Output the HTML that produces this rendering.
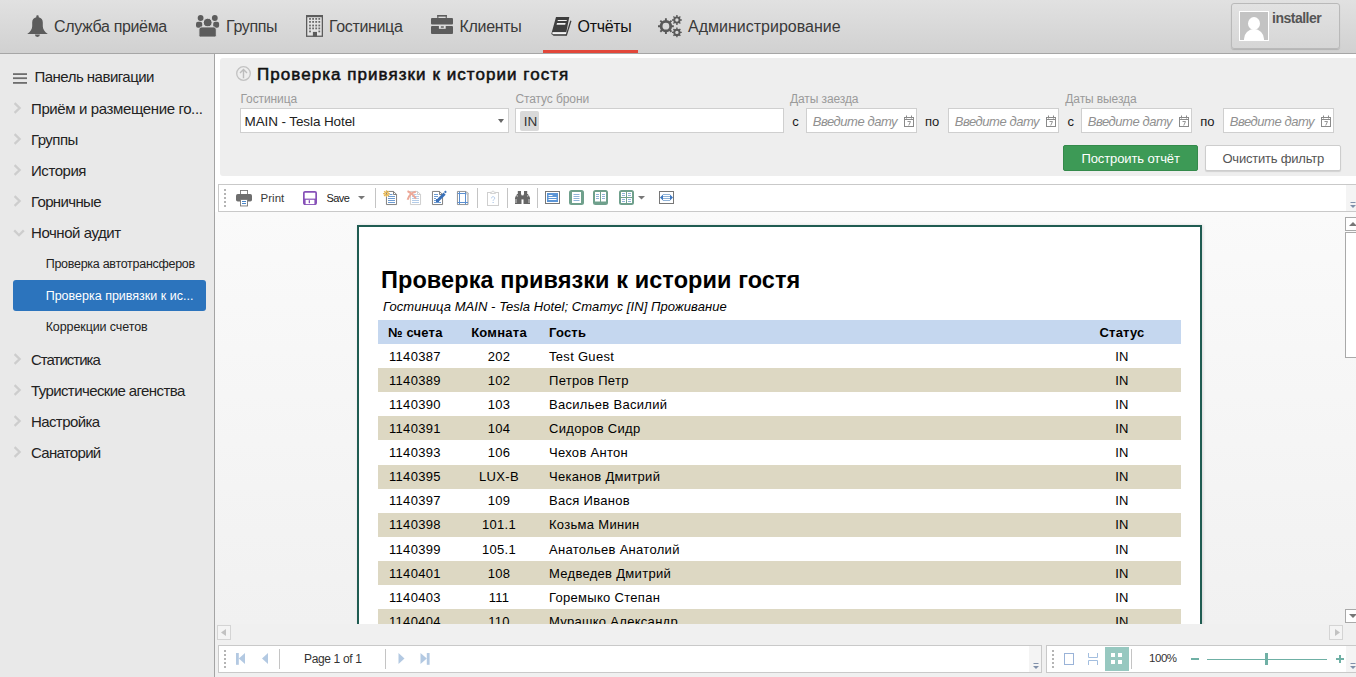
<!DOCTYPE html>
<html><head><meta charset="utf-8">
<style>
*{margin:0;padding:0;box-sizing:border-box}
html,body{width:1356px;height:677px;overflow:hidden;background:#fff;font-family:"Liberation Sans",sans-serif;color:#333}
.a{position:absolute}
.t{position:absolute;white-space:nowrap;line-height:1}
svg{position:absolute;overflow:visible}
#hdr{left:0;top:0;width:1356px;height:54px;background:linear-gradient(#e1e1e1,#d1d1d1);border-bottom:1px solid #a6a6a6}
.tab{font-size:16px;letter-spacing:-0.35px;color:#3a3a3a;top:18.5px}
#side{left:0;top:54px;width:215px;height:623px;background:#e9e9e9;border-right:1px solid #a4a4a4}
.mi{font-size:15px;letter-spacing:-0.45px;color:#222;left:31px}
.si{font-size:12.5px;letter-spacing:-0.1px;color:#222;left:45.7px}
.chev{left:13px;width:8px;height:12px}
#panel{left:220px;top:58px;width:1136px;height:118px;background:#eeeeee;border-radius:3px 0 0 3px}
.lbl{font-size:12px;color:#9a9a9a;top:92.5px;letter-spacing:-0.1px}
.inp{top:108px;height:25px;background:#fff;border:1px solid #cfcfcf}
.ph{font-size:13px;font-style:italic;color:#909090;letter-spacing:-0.45px;top:114.5px}
.po{font-size:13px;color:#1a1a1a;top:115.1px}
</style></head><body>

<!-- HEADER -->
<div id="hdr" class="a"></div>
<!-- bell -->
<svg style="left:27px;top:14.7px" width="21" height="23" viewBox="0 0 21 23"><path d="M10.4 0.3c-.7 0-1.1.5-1.1 1.1v.9C6.6 2.8 5.2 4.7 5.2 7.6v3.6C5.2 14 3.6 16.6 0.2 18.9h20.6C17.4 16.6 15.8 14 15.8 11.2V7.6c0-2.9-1.4-4.8-4.1-5.3v-.9c0-.6-.4-1.1-1.1-1.1z" fill="#5c5c5c"/><path d="M7.9 19.6a2.5 2.4 0 0 0 5 0z" fill="#5c5c5c"/></svg>
<div class="t tab" style="left:54px">Служба приёма</div>
<!-- groups -->
<svg style="left:192px;top:10px" width="34" height="30" viewBox="0 0 34 30"><circle cx="8.6" cy="8" r="2.9" fill="#5c5c5c"/><circle cx="22.8" cy="8" r="2.9" fill="#5c5c5c"/><rect x="4" y="11.7" width="6.2" height="6" rx="2" fill="#5c5c5c"/><rect x="21.2" y="11.7" width="5.9" height="6" rx="2" fill="#5c5c5c"/><circle cx="15.7" cy="12.6" r="4.4" fill="#5c5c5c" stroke="#dcdcdc" stroke-width="1"/><path d="M9.8 16.9h11.6c1.6 0 2.9 1.3 2.9 2.9v6c0 .9-.7 1.3-1.4 1.3H8.3c-.8 0-1.4-.5-1.4-1.3v-6c0-1.6 1.3-2.9 2.9-2.9z" fill="#5c5c5c" stroke="#dadada" stroke-width="1"/></svg>
<div class="t tab" style="left:226px">Группы</div>
<!-- building -->
<svg style="left:306px;top:15px" width="17" height="22" viewBox="0 0 17 22"><rect x="0.65" y="0.75" width="15.7" height="20.5" fill="#e4e4e4" stroke="#5c5c5c" stroke-width="1.3"/><rect x="0" y="0" width="17" height="2.2" fill="#5c5c5c"/><g fill="#6a6a6a"><rect x="3.1" y="3.0" width="1.8" height="1.8"/><rect x="6.2" y="3.0" width="1.8" height="1.8"/><rect x="9.3" y="3.0" width="1.8" height="1.8"/><rect x="12.4" y="3.0" width="1.8" height="1.8"/><rect x="3.1" y="6.0" width="1.8" height="1.8"/><rect x="6.2" y="6.0" width="1.8" height="1.8"/><rect x="9.3" y="6.0" width="1.8" height="1.8"/><rect x="12.4" y="6.0" width="1.8" height="1.8"/><rect x="3.1" y="9.6" width="1.8" height="1.8"/><rect x="6.2" y="9.6" width="1.8" height="1.8"/><rect x="9.3" y="9.6" width="1.8" height="1.8"/><rect x="12.4" y="9.6" width="1.8" height="1.8"/><rect x="3.1" y="12.5" width="1.8" height="1.8"/><rect x="6.2" y="12.5" width="1.8" height="1.8"/><rect x="9.3" y="12.5" width="1.8" height="1.8"/><rect x="12.4" y="12.5" width="1.8" height="1.8"/><rect x="3.1" y="15.6" width="1.8" height="1.7"/><rect x="12.4" y="15.6" width="1.8" height="1.7"/></g><rect x="6.9" y="16.9" width="4.1" height="4.6" fill="#5c5c5c"/></svg>
<div class="t tab" style="left:329px">Гостиница</div>
<!-- briefcase -->
<svg style="left:431px;top:15px" width="22" height="19" viewBox="0 0 22 19"><rect x="6.3" y="0" width="9.5" height="1.6" fill="#5c5c5c"/><rect x="6.3" y="0" width="1.1" height="3.2" fill="#5c5c5c"/><rect x="14.7" y="0" width="1.1" height="3.2" fill="#5c5c5c"/><rect x="0" y="3" width="22" height="6.6" rx="1" fill="#5c5c5c"/><rect x="0" y="11" width="22" height="8" rx="1" fill="#5c5c5c"/><rect x="7.9" y="10.6" width="6.8" height="3.2" fill="#e2e2e2"/><rect x="9.8" y="11.3" width="3" height="1.4" fill="#5c5c5c"/></svg>
<div class="t tab" style="left:459.6px">Клиенты</div>
<!-- book -->
<svg style="left:546px;top:10px" width="32" height="30" viewBox="0 0 32 30"><path d="M10 6.9H23.3L20.3 22.2V25.7H7.6L5.3 24.1z" fill="#3d3d3d"/><path d="M6.4 22.1H20.4V24.2H6.4z" fill="#f4f4f4"/><path d="M24.9 10.8L20.2 25.6" stroke="#3d3d3d" stroke-width="1.3"/><path d="M11.9 9.9H20.9L20.6 11.1H11.6z" fill="#f0f0f0"/><path d="M11 13.1H19.6L19.2 14.8H10.6z" fill="#f0f0f0"/></svg>
<div class="t tab" style="left:577.6px;color:#111">Отчёты</div>
<div class="a" style="left:543px;top:50px;width:95px;height:3px;background:#e2473a"></div>
<!-- gears -->
<svg style="left:653px;top:10px" width="34" height="30" viewBox="0 0 34 30"><circle cx="12.9" cy="16.2" r="4.8" fill="none" stroke="#595959" stroke-width="2.8"/><path d="M18.40 16.20L20.80 16.20M16.79 20.09L18.49 21.79M12.90 21.70L12.90 24.10M9.01 20.09L7.31 21.79M7.40 16.20L5.00 16.20M9.01 12.31L7.31 10.61M12.90 10.70L12.90 8.30M16.79 12.31L18.49 10.61" stroke="#595959" stroke-width="1.9"/><circle cx="23.9" cy="10" r="2.65" fill="none" stroke="#595959" stroke-width="1.9"/><path d="M26.90 10.00L28.80 10.00M26.02 12.12L27.36 13.46M23.90 13.00L23.90 14.90M21.78 12.12L20.44 13.46M20.90 10.00L19.00 10.00M21.78 7.88L20.44 6.54M23.90 7.00L23.90 5.10M26.02 7.88L27.36 6.54" stroke="#595959" stroke-width="1.4"/><circle cx="23.9" cy="22.4" r="2.65" fill="none" stroke="#595959" stroke-width="1.9"/><path d="M26.90 22.40L28.80 22.40M26.02 24.52L27.36 25.86M23.90 25.40L23.90 27.30M21.78 24.52L20.44 25.86M20.90 22.40L19.00 22.40M21.78 20.28L20.44 18.94M23.90 19.40L23.90 17.50M26.02 20.28L27.36 18.94" stroke="#595959" stroke-width="1.4"/></svg>
<div class="t tab" style="left:688px;letter-spacing:0">Администрирование</div>
<!-- user -->
<div class="a" style="left:1231px;top:3px;width:109px;height:46px;border:1px solid #b9b9b9;border-radius:3px;background:linear-gradient(#e2e2e2,#d6d6d6);box-shadow:0 1px 1px rgba(0,0,0,.15)"></div>
<div class="a" style="left:1239px;top:11px;width:30px;height:30px;background:#c3c3c3;border:1px solid #fff;overflow:hidden">
<div class="a" style="left:8px;top:5px;width:12px;height:13px;border-radius:50%;background:#fff"></div>
<div class="a" style="left:4px;top:17px;width:20px;height:18px;border-radius:10px 10px 0 0;background:#fff"></div>
</div>
<div class="t" style="left:1272px;top:11px;font-size:14px;font-weight:bold;color:#555;letter-spacing:-0.5px">installer</div>

<!-- SIDEBAR -->
<div id="side" class="a"></div>
<svg style="left:13px;top:73px" width="14" height="11" viewBox="0 0 14 11"><rect y="0.2" width="14" height="1.8" fill="#6e6e6e"/><rect y="4.3" width="14" height="1.8" fill="#6e6e6e"/><rect y="9" width="14" height="1.8" fill="#6e6e6e"/></svg>
<div class="t mi" style="left:34.5px;top:69.3px;letter-spacing:-0.52px">Панель навигации</div>
<svg class="chev" style="top:102px" viewBox="0 0 8 12"><path d="M1.6 1.2l5 4.8-5 4.8" fill="none" stroke="#cdcdcd" stroke-width="2.3"/></svg>
<div class="t mi" style="top:100.6px;letter-spacing:-0.38px">Приём и размещение го...</div>
<svg class="chev" style="top:133px" viewBox="0 0 8 12"><path d="M1.6 1.2l5 4.8-5 4.8" fill="none" stroke="#cdcdcd" stroke-width="2.3"/></svg>
<div class="t mi" style="top:131.6px;letter-spacing:-0.55px">Группы</div>
<svg class="chev" style="top:164px" viewBox="0 0 8 12"><path d="M1.6 1.2l5 4.8-5 4.8" fill="none" stroke="#cdcdcd" stroke-width="2.3"/></svg>
<div class="t mi" style="top:162.6px;letter-spacing:-0.45px">История</div>
<svg class="chev" style="top:195px" viewBox="0 0 8 12"><path d="M1.6 1.2l5 4.8-5 4.8" fill="none" stroke="#cdcdcd" stroke-width="2.3"/></svg>
<div class="t mi" style="top:193.6px;letter-spacing:-0.65px">Горничные</div>
<svg style="left:13px;top:229px" width="12" height="8" viewBox="0 0 12 8"><path d="M1.2 1.4l4.8 4.8 4.8-4.8" fill="none" stroke="#cdcdcd" stroke-width="2.3"/></svg>
<div class="t mi" style="top:224.6px;letter-spacing:-0.45px">Ночной аудит</div>
<div class="t si" style="top:257.7px;letter-spacing:-0.28px">Проверка автотрансферов</div>
<div class="a" style="left:13px;top:280px;width:193px;height:31px;background:#2c74bd;border-radius:3px"></div>
<div class="t si" style="top:289.8px;color:#fff;letter-spacing:0">Проверка привязки к ис...</div>
<div class="t si" style="top:321.4px">Коррекции счетов</div>
<svg class="chev" style="top:353px" viewBox="0 0 8 12"><path d="M1.6 1.2l5 4.8-5 4.8" fill="none" stroke="#cdcdcd" stroke-width="2.3"/></svg>
<div class="t mi" style="top:351.6px;letter-spacing:-1.0px">Статистика</div>
<svg class="chev" style="top:384px" viewBox="0 0 8 12"><path d="M1.6 1.2l5 4.8-5 4.8" fill="none" stroke="#cdcdcd" stroke-width="2.3"/></svg>
<div class="t mi" style="top:382.6px;letter-spacing:-0.6px">Туристические агенства</div>
<svg class="chev" style="top:415px" viewBox="0 0 8 12"><path d="M1.6 1.2l5 4.8-5 4.8" fill="none" stroke="#cdcdcd" stroke-width="2.3"/></svg>
<div class="t mi" style="top:414.0px;letter-spacing:-0.6px">Настройка</div>
<svg class="chev" style="top:446px" viewBox="0 0 8 12"><path d="M1.6 1.2l5 4.8-5 4.8" fill="none" stroke="#cdcdcd" stroke-width="2.3"/></svg>
<div class="t mi" style="top:444.6px;letter-spacing:-0.7px">Санаторий</div>

<!-- PANEL -->
<div id="panel" class="a"></div>
<svg style="left:236px;top:66px" width="15" height="15" viewBox="0 0 15 15"><circle cx="7.5" cy="7.5" r="6.8" fill="none" stroke="#c2c2c2" stroke-width="1.3"/><path d="M7.5 12.2V3.6M4 7.1l3.5-3.5L11 7.1" fill="none" stroke="#bcbcbc" stroke-width="1.4"/></svg>
<div class="t" style="left:257px;top:65.6px;font-size:17px;font-weight:normal;-webkit-text-stroke:0.55px #111;color:#111;letter-spacing:1.05px">Проверка привязки к истории гостя</div>
<div class="t lbl" style="left:240.5px">Гостиница</div>
<div class="t lbl" style="left:515.4px">Статус брони</div>
<div class="t lbl" style="left:790px">Даты заезда</div>
<div class="t lbl" style="left:1065.3px">Даты выезда</div>
<div class="a inp" style="left:240px;width:269px"></div>
<div class="t" style="left:244.5px;top:114.6px;font-size:13.5px;color:#222;letter-spacing:-0.1px">MAIN - Tesla Hotel</div>
<svg style="left:498px;top:119px" width="6" height="4" viewBox="0 0 6 4"><path d="M0 0h6L3 4z" fill="#666"/></svg>
<div class="a inp" style="left:515px;width:269px"></div>
<div class="a" style="left:520px;top:111px;width:19px;height:20px;background:#d9d9d9;border-radius:2px"></div>
<div class="t" style="left:523.8px;top:114.6px;font-size:13.5px;color:#333">IN</div>
<div class="t po" style="left:792.2px">с</div>
<div class="a inp" style="left:806px;width:111px"></div>
<div class="t ph" style="left:812.7px">Введите дату</div>
<div class="t po" style="left:925px">по</div>
<div class="a inp" style="left:948px;width:111px"></div>
<div class="t ph" style="left:954.7px">Введите дату</div>
<div class="t po" style="left:1067.5px">с</div>
<div class="a inp" style="left:1081px;width:111px"></div>
<div class="t ph" style="left:1087.7px">Введите дату</div>
<div class="t po" style="left:1200.2px">по</div>
<div class="a inp" style="left:1223px;width:111px"></div>
<div class="t ph" style="left:1229.7px">Введите дату</div>
<div class="a" style="left:1063px;top:145px;width:135px;height:26px;background:#3d9a56;border:1px solid #348a4b;border-radius:2px"></div>
<div class="t" style="left:1081.4px;top:151.8px;font-size:13px;color:#fff;letter-spacing:-0.1px">Построить отчёт</div>
<div class="a" style="left:1205px;top:145px;width:136px;height:26px;background:#fff;border:1px solid #cdcdcd;border-radius:2px;box-shadow:0 1px 1px rgba(0,0,0,.12)"></div>
<div class="t" style="left:1222.4px;top:151.8px;font-size:13px;color:#555;letter-spacing:-0.2px">Очистить фильтр</div>
<svg style="left:904px;top:115px" width="10" height="12" viewBox="0 0 10 12"><rect x="0.5" y="2.5" width="9" height="9" fill="none" stroke="#8a8a8a" stroke-width="1"/><path d="M0.5 4.5h9" stroke="#8a8a8a"/><path d="M2.5 0.5v3M7.5 0.5v3" stroke="#8a8a8a"/><path d="M3.5 6.5h3l-1.8 4" fill="none" stroke="#8a8a8a" stroke-width="0.9"/></svg>
<svg style="left:1046px;top:115px" width="10" height="12" viewBox="0 0 10 12"><rect x="0.5" y="2.5" width="9" height="9" fill="none" stroke="#8a8a8a" stroke-width="1"/><path d="M0.5 4.5h9" stroke="#8a8a8a"/><path d="M2.5 0.5v3M7.5 0.5v3" stroke="#8a8a8a"/><path d="M3.5 6.5h3l-1.8 4" fill="none" stroke="#8a8a8a" stroke-width="0.9"/></svg>
<svg style="left:1179px;top:115px" width="10" height="12" viewBox="0 0 10 12"><rect x="0.5" y="2.5" width="9" height="9" fill="none" stroke="#8a8a8a" stroke-width="1"/><path d="M0.5 4.5h9" stroke="#8a8a8a"/><path d="M2.5 0.5v3M7.5 0.5v3" stroke="#8a8a8a"/><path d="M3.5 6.5h3l-1.8 4" fill="none" stroke="#8a8a8a" stroke-width="0.9"/></svg>
<svg style="left:1321px;top:115px" width="10" height="12" viewBox="0 0 10 12"><rect x="0.5" y="2.5" width="9" height="9" fill="none" stroke="#8a8a8a" stroke-width="1"/><path d="M0.5 4.5h9" stroke="#8a8a8a"/><path d="M2.5 0.5v3M7.5 0.5v3" stroke="#8a8a8a"/><path d="M3.5 6.5h3l-1.8 4" fill="none" stroke="#8a8a8a" stroke-width="0.9"/></svg>

<!-- VIEWER TOOLBAR -->
<div class="a" style="left:218px;top:184px;width:1138px;height:28px;background:#fff;border:1px solid #c9c9c9;border-right:none"></div>
<div class="a" style="left:1346px;top:185px;width:10px;height:26px;background:#f4f4f4"></div>
<svg style="left:1349.5px;top:202px" width="7" height="7" viewBox="0 0 7 7"><path d="M0.5 0.5h5" stroke="#8090aa" stroke-width="1"/><path d="M0 3h6L3 6z" fill="#8090aa"/></svg>
<div class="a" style="left:224px;top:189px;width:2px;height:18px;background:repeating-linear-gradient(#b4b4b4 0 2px,transparent 2px 4px)"></div>
<!-- printer -->
<svg style="left:230px;top:185px" width="25" height="25" viewBox="0 0 25 25"><rect x="10.45" y="5.45" width="7.1" height="4.2" fill="#fff" stroke="#777" stroke-width="0.9"/><path d="M10.4 9.5h7.2" stroke="#4a86c8" stroke-width="1"/><rect x="6" y="9" width="16" height="7.6" rx="1.8" fill="#6e6e6e"/><rect x="10.45" y="14.45" width="7.1" height="6.5" fill="#fff" stroke="#777" stroke-width="0.9"/><path d="M12 16.5h4M12 18.5h4" stroke="#4a86c8" stroke-width="1"/></svg>
<div class="t" style="left:260.6px;top:193.2px;font-size:11.5px;color:#3a3a3a;letter-spacing:0">Print</div>
<!-- save -->
<svg style="left:303px;top:191px" width="14" height="14" viewBox="0 0 14 14"><rect x="0.85" y="0.85" width="12.3" height="12.3" rx="1.2" fill="#fff" stroke="#8751b8" stroke-width="1.7"/><path d="M1 7.6h12v6H1z" fill="#8751b8"/><rect x="2.6" y="8.8" width="8.8" height="4.3" fill="#fff"/><rect x="5.7" y="9.2" width="1.3" height="3" fill="#8751b8"/></svg>
<div class="t" style="left:326.4px;top:193.2px;font-size:11px;color:#222;letter-spacing:-0.55px">Save</div>
<svg style="left:358px;top:196px" width="7" height="4" viewBox="0 0 7 4"><path d="M0 0h7L3.5 3.5z" fill="#777"/></svg>
<div class="a" style="left:375px;top:188px;width:1px;height:20px;background:#c4c4c4"></div>
<!-- docs -->
<svg style="left:380px;top:186px" width="70" height="22" viewBox="0 0 70 22"><path d="M6.45 5.45h7.1l3 3v10.1h-10.1z" fill="#fff" stroke="#737373" stroke-width="0.9"/><path d="M13.5 5.5v3h3" fill="none" stroke="#737373" stroke-width="0.9"/><path d="M9.5 8.5h3M8 10.5h7M8 12.5h7M8 14.5h7M8 16.5h7" stroke="#6d9bd2" stroke-width="1"/><path d="M7.50 7.60L9.90 7.60M7.21 8.31L8.90 10.00M6.50 8.60L6.50 11.00M5.79 8.31L4.10 10.00M5.50 7.60L3.10 7.60M5.79 6.89L4.10 5.20M6.50 6.60L6.50 4.20M7.21 6.89L8.90 5.20" stroke="#e9b955" stroke-width="1.3"/><circle cx="6.5" cy="7.599999999999994" r="1.6" fill="none" stroke="#e9b955" stroke-width="1"/><path d="M30.45 5.45h7.1l3 3v10.1h-10.1z" fill="#fff" stroke="#c8c8c8" stroke-width="0.9"/><path d="M37.5 5.5v3h3" fill="none" stroke="#c8c8c8" stroke-width="0.9"/><path d="M33.5 8.5h3M32 10.5h7M32 12.5h7M32 14.5h7M32 16.5h7" stroke="#b4cce8" stroke-width="1"/><path d="M27.5 5.2c3.5 1.6 6.2 4.2 8.5 7.6M35.8 5.8c-3.8.6-6.8 3.6-8.2 8" fill="none" stroke="#eca898" stroke-width="1.9"/><path d="M52.45 5.45h7.1l3 3v10.1h-10.1z" fill="#fff" stroke="#737373" stroke-width="0.9"/><path d="M59.5 5.5v3h3" fill="none" stroke="#737373" stroke-width="0.9"/><path d="M54 8.5h4M54 10.5h4M54 12.5h2M54 14.5h2M54 16.5h7" stroke="#6d9bd2" stroke-width="1"/><path d="M58 14.2L64.6 7.6" stroke="#3a70b8" stroke-width="3"/><path d="M64 6l1.3-1.6 1.6 1.6-1.6 1.3z" fill="#3a70b8"/><path d="M56 13h3v3h-3z" fill="#3a70b8"/></svg>
<svg style="left:457px;top:191px" width="12" height="14" viewBox="0 0 12 14"><path d="M0.45 0.45h8.6l1.9 1.9v11.2H0.45z" fill="#fff" stroke="#888" stroke-width="0.9"/><path d="M2.5 0.5v13M8.5 1v12.5M0.5 2.5h10.5M0.5 11.5h10.5" stroke="#5b8fd0" stroke-width="1"/><circle cx="10" cy="2.2" r="1" fill="#fff" stroke="#999" stroke-width="0.6"/></svg>
<div class="a" style="left:477px;top:188px;width:1px;height:20px;background:#c4c4c4"></div>
<svg style="left:487px;top:190px" width="12" height="16" viewBox="0 0 12 16"><rect x="0.5" y="2.5" width="11" height="13" fill="#fff" stroke="#cfcfcf" stroke-width="1"/><path d="M3.5 3.5h5v-1.2h-1.3a1.2 1.2 0 0 0-2.4 0H3.5z" fill="#fff" stroke="#cfcfcf" stroke-width="0.9"/><path d="M4.5 8.3c0-1 .7-1.6 1.6-1.6s1.6.6 1.6 1.5c0 1.2-1.6 1.2-1.6 2.6" fill="none" stroke="#a9c4e6" stroke-width="0.9"/><path d="M5.5 12.5h1.3" stroke="#a9c4e6" stroke-width="0.9"/></svg>
<div class="a" style="left:507px;top:188px;width:1px;height:20px;background:#c4c4c4"></div>
<svg style="left:515px;top:191px" width="15" height="13" viewBox="0 0 15 13"><path d="M2.8 0h3.2v3.5h0.5V13H0V7l1-2.5h0.8V3H2.8z" fill="#666"/><path d="M12.2 0H9v3.5h-0.5V13H15V7l-1-2.5h-0.8V3h-1z" fill="#666"/><rect x="5.5" y="4.4" width="4" height="4" fill="#666"/><path d="M1 8v4M14 8v4" stroke="#e6e6e6" stroke-width="0.8"/><path d="M2.3 4v2M12.7 4v2" stroke="#d8d8d8" stroke-width="0.6"/></svg>
<div class="a" style="left:537px;top:188px;width:1px;height:20px;background:#c4c4c4"></div>
<svg style="left:545px;top:191px" width="15" height="13" viewBox="0 0 15 13"><rect x="0.5" y="0.5" width="14" height="12" fill="#fff" stroke="#777" stroke-width="1"/><rect x="2" y="2" width="11" height="9" fill="#5b95d6"/><path d="M3.5 4.5h4M3.5 6.5h8M3.5 8.5h8" stroke="#fff" stroke-width="1"/></svg>
<svg style="left:569px;top:190px" width="15" height="15" viewBox="0 0 15 15"><rect x="0" y="0" width="15" height="15" rx="2.5" fill="#6fa08c"/><rect x="3" y="2" width="9" height="11" fill="#fff"/><path d="M4.5 4.5h6M4.5 6.5h6M4.5 8.5h6M4.5 10.5h6" stroke="#8fb3d8" stroke-width="1"/></svg>
<svg style="left:593px;top:190px" width="15" height="15" viewBox="0 0 15 15"><rect x="0" y="0" width="15" height="15" rx="2.5" fill="#6fa08c"/><rect x="2" y="2" width="5" height="9.5" fill="#fff"/><rect x="8" y="2" width="5" height="9.5" fill="#fff"/><path d="M3 4.5h3M3 6.5h3M3 8.5h3M9 4.5h3M9 6.5h3M9 8.5h3" stroke="#8fb3d8" stroke-width="1"/></svg>
<svg style="left:619px;top:190px" width="15" height="15" viewBox="0 0 15 15"><rect x="0" y="0" width="15" height="15" rx="2.5" fill="#6fa08c"/><rect x="2" y="2" width="5" height="5" fill="#fff"/><rect x="8" y="2" width="5" height="5" fill="#fff"/><rect x="2" y="8" width="5" height="5" fill="#fff"/><rect x="8" y="8" width="5" height="5" fill="#fff"/><path d="M3 3.5h3M9 3.5h3M3 5.5h3M9 5.5h3M3 9.5h3M9 9.5h3M3 11.5h3M9 11.5h3" stroke="#8fb3d8" stroke-width="1"/></svg>
<svg style="left:638px;top:196px" width="7" height="4" viewBox="0 0 7 4"><path d="M0 0h7L3.5 3.5z" fill="#777"/></svg>
<svg style="left:659px;top:191px" width="15" height="13" viewBox="0 0 15 13"><rect x="0.5" y="0.5" width="14" height="12" fill="#fff" stroke="#777" stroke-width="1"/><path d="M4 3.5h7M4 5.5h7M4 7.5h7M4 9.5h7" stroke="#8fb3d8" stroke-width="1"/><path d="M1 6.5l3-3v6zM14 6.5l-3-3v6z" fill="#3f78c0"/></svg>

<!-- CONTENT -->
<div class="a" style="left:215px;top:212px;width:1141px;height:412px;background:linear-gradient(#fafafa,#f1f1f1);overflow:hidden">
 <div class="a" style="left:142px;top:13px;width:845px;height:420px;background:#fff;border:2px solid #205c52;border-bottom:none;box-shadow:1px 0 3px rgba(0,0,0,.12)"></div>
</div>

<div class="t" style="left:381px;top:268.9px;font-size:23.5px;font-weight:bold;color:#000;letter-spacing:0.08px">Проверка привязки к истории гостя</div>
<div class="t" style="left:383px;top:300.4px;font-size:13px;font-style:italic;color:#000;letter-spacing:0.07px">Гостиница MAIN - Tesla Hotel; Статус [IN] Проживание</div>
<div class="a" style="left:215px;top:212px;width:1130px;height:412px;overflow:hidden">
<div class="a" style="left:163px;top:108px;width:803px;height:24.1px;background:#c5d7ef"></div>
<div class="t" style="left:173px;top:114.1px;font-size:13px;font-weight:bold;color:#000;letter-spacing:0.2px">№ счета</div>
<div class="t" style="left:244px;width:80px;text-align:center;top:114.1px;font-size:13px;font-weight:bold;color:#000;letter-spacing:0.25px">Комната</div>
<div class="t" style="left:334px;top:114.1px;font-size:13px;font-weight:bold;color:#000;letter-spacing:0.2px">Гость</div>
<div class="t" style="left:867px;width:80px;text-align:center;top:114.1px;font-size:13px;font-weight:bold;color:#000;letter-spacing:0.2px">Статус</div>
<div class="t" style="left:174px;top:137.7px;font-size:13px;color:#000;letter-spacing:0.3px">1140387</div>
<div class="t" style="left:244px;width:80px;text-align:center;top:137.7px;font-size:13px;color:#000;letter-spacing:0.3px">202</div>
<div class="t" style="left:334px;top:137.7px;font-size:13px;color:#000;letter-spacing:0.3px">Test Guest</div>
<div class="t" style="left:867px;width:80px;text-align:center;top:137.7px;font-size:13px;color:#000;letter-spacing:0.3px">IN</div>
<div class="a" style="left:163px;top:156.2px;width:803px;height:24.1px;background:#ddd8c3"></div>
<div class="t" style="left:174px;top:161.8px;font-size:13px;color:#000;letter-spacing:0.3px">1140389</div>
<div class="t" style="left:244px;width:80px;text-align:center;top:161.8px;font-size:13px;color:#000;letter-spacing:0.3px">102</div>
<div class="t" style="left:334px;top:161.8px;font-size:13px;color:#000;letter-spacing:0.3px">Петров Петр</div>
<div class="t" style="left:867px;width:80px;text-align:center;top:161.8px;font-size:13px;color:#000;letter-spacing:0.3px">IN</div>
<div class="t" style="left:174px;top:185.9px;font-size:13px;color:#000;letter-spacing:0.3px">1140390</div>
<div class="t" style="left:244px;width:80px;text-align:center;top:185.9px;font-size:13px;color:#000;letter-spacing:0.3px">103</div>
<div class="t" style="left:334px;top:185.9px;font-size:13px;color:#000;letter-spacing:0.3px">Васильев Василий</div>
<div class="t" style="left:867px;width:80px;text-align:center;top:185.9px;font-size:13px;color:#000;letter-spacing:0.3px">IN</div>
<div class="a" style="left:163px;top:204.4px;width:803px;height:24.1px;background:#ddd8c3"></div>
<div class="t" style="left:174px;top:210.0px;font-size:13px;color:#000;letter-spacing:0.3px">1140391</div>
<div class="t" style="left:244px;width:80px;text-align:center;top:210.0px;font-size:13px;color:#000;letter-spacing:0.3px">104</div>
<div class="t" style="left:334px;top:210.0px;font-size:13px;color:#000;letter-spacing:0.3px">Сидоров Сидр</div>
<div class="t" style="left:867px;width:80px;text-align:center;top:210.0px;font-size:13px;color:#000;letter-spacing:0.3px">IN</div>
<div class="t" style="left:174px;top:234.1px;font-size:13px;color:#000;letter-spacing:0.3px">1140393</div>
<div class="t" style="left:244px;width:80px;text-align:center;top:234.1px;font-size:13px;color:#000;letter-spacing:0.3px">106</div>
<div class="t" style="left:334px;top:234.1px;font-size:13px;color:#000;letter-spacing:0.3px">Чехов Антон</div>
<div class="t" style="left:867px;width:80px;text-align:center;top:234.1px;font-size:13px;color:#000;letter-spacing:0.3px">IN</div>
<div class="a" style="left:163px;top:252.6px;width:803px;height:24.1px;background:#ddd8c3"></div>
<div class="t" style="left:174px;top:258.2px;font-size:13px;color:#000;letter-spacing:0.3px">1140395</div>
<div class="t" style="left:244px;width:80px;text-align:center;top:258.2px;font-size:13px;color:#000;letter-spacing:0.3px">LUX-B</div>
<div class="t" style="left:334px;top:258.2px;font-size:13px;color:#000;letter-spacing:0.3px">Чеканов Дмитрий</div>
<div class="t" style="left:867px;width:80px;text-align:center;top:258.2px;font-size:13px;color:#000;letter-spacing:0.3px">IN</div>
<div class="t" style="left:174px;top:282.3px;font-size:13px;color:#000;letter-spacing:0.3px">1140397</div>
<div class="t" style="left:244px;width:80px;text-align:center;top:282.3px;font-size:13px;color:#000;letter-spacing:0.3px">109</div>
<div class="t" style="left:334px;top:282.3px;font-size:13px;color:#000;letter-spacing:0.3px">Вася Иванов</div>
<div class="t" style="left:867px;width:80px;text-align:center;top:282.3px;font-size:13px;color:#000;letter-spacing:0.3px">IN</div>
<div class="a" style="left:163px;top:300.8px;width:803px;height:24.1px;background:#ddd8c3"></div>
<div class="t" style="left:174px;top:306.4px;font-size:13px;color:#000;letter-spacing:0.3px">1140398</div>
<div class="t" style="left:244px;width:80px;text-align:center;top:306.4px;font-size:13px;color:#000;letter-spacing:0.3px">101.1</div>
<div class="t" style="left:334px;top:306.4px;font-size:13px;color:#000;letter-spacing:0.3px">Козьма Минин</div>
<div class="t" style="left:867px;width:80px;text-align:center;top:306.4px;font-size:13px;color:#000;letter-spacing:0.3px">IN</div>
<div class="t" style="left:174px;top:330.5px;font-size:13px;color:#000;letter-spacing:0.3px">1140399</div>
<div class="t" style="left:244px;width:80px;text-align:center;top:330.5px;font-size:13px;color:#000;letter-spacing:0.3px">105.1</div>
<div class="t" style="left:334px;top:330.5px;font-size:13px;color:#000;letter-spacing:0.3px">Анатольев Анатолий</div>
<div class="t" style="left:867px;width:80px;text-align:center;top:330.5px;font-size:13px;color:#000;letter-spacing:0.3px">IN</div>
<div class="a" style="left:163px;top:349.0px;width:803px;height:24.1px;background:#ddd8c3"></div>
<div class="t" style="left:174px;top:354.6px;font-size:13px;color:#000;letter-spacing:0.3px">1140401</div>
<div class="t" style="left:244px;width:80px;text-align:center;top:354.6px;font-size:13px;color:#000;letter-spacing:0.3px">108</div>
<div class="t" style="left:334px;top:354.6px;font-size:13px;color:#000;letter-spacing:0.3px">Медведев Дмитрий</div>
<div class="t" style="left:867px;width:80px;text-align:center;top:354.6px;font-size:13px;color:#000;letter-spacing:0.3px">IN</div>
<div class="t" style="left:174px;top:378.7px;font-size:13px;color:#000;letter-spacing:0.3px">1140403</div>
<div class="t" style="left:244px;width:80px;text-align:center;top:378.7px;font-size:13px;color:#000;letter-spacing:0.3px">111</div>
<div class="t" style="left:334px;top:378.7px;font-size:13px;color:#000;letter-spacing:0.3px">Горемыко Степан</div>
<div class="t" style="left:867px;width:80px;text-align:center;top:378.7px;font-size:13px;color:#000;letter-spacing:0.3px">IN</div>
<div class="a" style="left:163px;top:397.2px;width:803px;height:24.1px;background:#ddd8c3"></div>
<div class="t" style="left:174px;top:402.8px;font-size:13px;color:#000;letter-spacing:0.3px">1140404</div>
<div class="t" style="left:244px;width:80px;text-align:center;top:402.8px;font-size:13px;color:#000;letter-spacing:0.3px">110</div>
<div class="t" style="left:334px;top:402.8px;font-size:13px;color:#000;letter-spacing:0.3px">Мурашко Александр</div>
<div class="t" style="left:867px;width:80px;text-align:center;top:402.8px;font-size:13px;color:#000;letter-spacing:0.3px">IN</div>
</div>

<!-- vertical scrollbar -->
<div class="a" style="left:1345px;top:217px;width:12px;height:14px;background:#fff;border:1px solid #a9a9a9"></div>
<svg style="left:1349px;top:222px" width="8" height="4" viewBox="0 0 8 4"><path d="M0 4h8L4 0z" fill="#777"/></svg>
<div class="a" style="left:1345px;top:232px;width:12px;height:126px;background:#fff;border:1px solid #a9a9a9"></div>
<div class="a" style="left:1345px;top:609px;width:12px;height:14px;background:#fff;border:1px solid #a9a9a9"></div>
<svg style="left:1349px;top:614px" width="8" height="4" viewBox="0 0 8 4"><path d="M0 0h8L4 4z" fill="#777"/></svg>
<!-- horizontal scrollbar -->
<div class="a" style="left:215px;top:624px;width:1141px;height:21px;background:#f0f0f0"></div>
<div class="a" style="left:217px;top:625px;width:14px;height:15px;background:#f4f4f4;border:1px solid #d4d4d4"></div>
<svg style="left:221px;top:629px" width="5" height="7" viewBox="0 0 5 7"><path d="M5 0v7L0 3.5z" fill="#c2c2c2"/></svg>
<div class="a" style="left:1329px;top:625px;width:14px;height:15px;background:#f4f4f4;border:1px solid #d4d4d4"></div>
<svg style="left:1335px;top:629px" width="5" height="7" viewBox="0 0 5 7"><path d="M0 0v7L5 3.5z" fill="#c2c2c2"/></svg>
<div class="a" style="left:215px;top:645px;width:1141px;height:32px;background:#f0f0f0"></div>
<!-- bottom toolbar left -->
<div class="a" style="left:218px;top:645px;width:824px;height:28px;background:#fff;border:1px solid #c9c9c9"></div>
<div class="a" style="left:1029px;top:646px;width:12px;height:26px;background:#f4f4f4"></div>
<svg style="left:1032.5px;top:663px" width="7" height="7" viewBox="0 0 7 7"><path d="M0.5 0.5h5" stroke="#8090aa" stroke-width="1"/><path d="M0 3h6L3 6z" fill="#8090aa"/></svg>
<div class="a" style="left:224px;top:650px;width:2px;height:18px;background:repeating-linear-gradient(#b4b4b4 0 2px,transparent 2px 4px)"></div>
<svg style="left:235px;top:652px" width="11" height="13" viewBox="0 0 11 13"><rect x="1" y="1" width="2.8" height="11.8" fill="#b3c9e2"/><path d="M10 1v11L3.8 6.5z" fill="#b3c9e2"/></svg>
<svg style="left:262px;top:652px" width="7" height="13" viewBox="0 0 7 13"><path d="M6 1v11L0 6.5z" fill="#b3c9e2"/></svg>
<div class="a" style="left:279px;top:649px;width:1px;height:20px;background:#c4c4c4"></div>
<div class="t" style="left:304px;top:652.8px;font-size:12px;color:#333;letter-spacing:-0.35px">Page 1 of 1</div>
<div class="a" style="left:385px;top:649px;width:1px;height:20px;background:#c4c4c4"></div>
<svg style="left:397.5px;top:652px" width="7" height="13" viewBox="0 0 7 13"><path d="M0.5 1v11L6.5 6.5z" fill="#b3c9e2"/></svg>
<svg style="left:419.5px;top:652px" width="11" height="13" viewBox="0 0 11 13"><rect x="6.8" y="1" width="2.8" height="11.8" fill="#b3c9e2"/><path d="M0.5 1v11L6.8 6.5z" fill="#b3c9e2"/></svg>
<!-- bottom toolbar right -->
<div class="a" style="left:1046px;top:645px;width:310px;height:28px;background:#fff;border:1px solid #c9c9c9;border-right:none"></div>
<div class="a" style="left:1346px;top:646px;width:10px;height:26px;background:#f4f4f4"></div>
<svg style="left:1349.5px;top:663px" width="7" height="7" viewBox="0 0 7 7"><path d="M0.5 0.5h5" stroke="#8090aa" stroke-width="1"/><path d="M0 3h6L3 6z" fill="#8090aa"/></svg>
<div class="a" style="left:1052px;top:650px;width:2px;height:18px;background:repeating-linear-gradient(#b4b4b4 0 2px,transparent 2px 4px)"></div>
<svg style="left:1064px;top:653px" width="10" height="12" viewBox="0 0 10 12"><rect x="0.5" y="0.5" width="9" height="11" fill="none" stroke="#9ab3d8" stroke-width="1"/></svg>
<svg style="left:1088px;top:653px" width="10" height="12" viewBox="0 0 10 12"><path d="M0.5 0v4.5h9V0M0.5 12V7.5h9V12" fill="none" stroke="#a3bedf" stroke-width="1"/></svg>
<div class="a" style="left:1105px;top:647px;width:24px;height:24px;background:#97c8c0"></div>
<svg style="left:1111px;top:653px" width="12" height="12" viewBox="0 0 12 12"><rect x="0" y="0" width="4" height="4" fill="#fff"/><rect x="7" y="0" width="4" height="4" fill="#fff"/><rect x="0" y="7" width="4" height="4" fill="#fff"/><rect x="7" y="7" width="4" height="4" fill="#fff"/></svg>
<div class="a" style="left:1131px;top:649px;width:1px;height:20px;background:#c4c4c4"></div>
<div class="t" style="left:1149px;top:653px;font-size:11.5px;color:#333;letter-spacing:-0.45px">100%</div>
<div class="a" style="left:1191px;top:658px;width:8px;height:2px;background:#6fb0a5"></div>
<div class="a" style="left:1207px;top:658.5px;width:120px;height:1px;background:#6fb0a5"></div>
<div class="a" style="left:1265px;top:653px;width:3px;height:12px;background:#6fb0a5"></div>
<div class="a" style="left:1336px;top:658px;width:8px;height:2px;background:#6fb0a5"></div>
<div class="a" style="left:1339px;top:655px;width:2px;height:8px;background:#6fb0a5"></div>

</body></html>
